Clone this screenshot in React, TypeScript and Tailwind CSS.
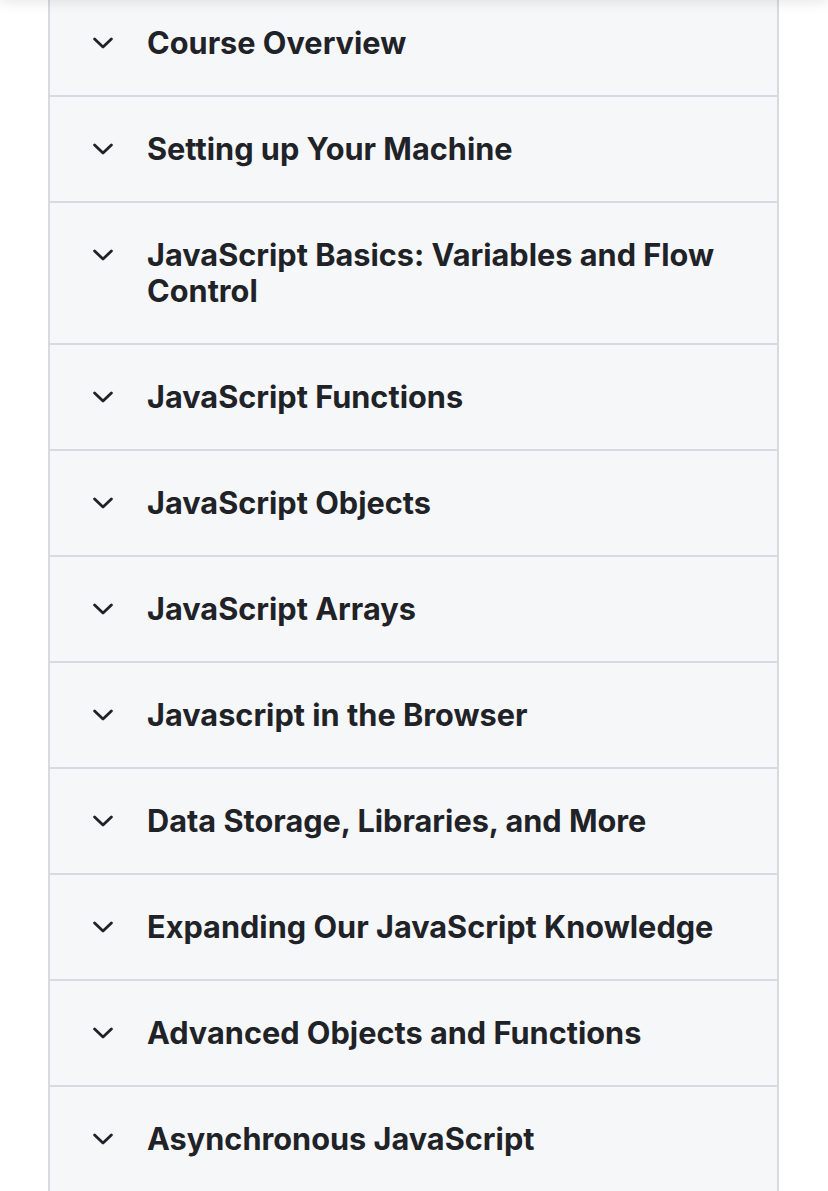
import React from "react";

const items = [
  "Course Overview",
  "Setting up Your Machine",
  "JavaScript Basics: Variables and Flow Control",
  "JavaScript Functions",
  "JavaScript Objects",
  "JavaScript Arrays",
  "Javascript in the Browser",
  "Data Storage, Libraries, and More",
  "Expanding Our JavaScript Knowledge",
  "Advanced Objects and Functions",
  "Asynchronous JavaScript",
];

function Chevron() {
  return (
    <svg width="20" height="12" viewBox="0 0 20 12" fill="none" className="block">
      <path d="M1.6 2 L10 10 L18.4 2" stroke="#1f2328" strokeWidth="2.8" strokeLinecap="round" strokeLinejoin="round" />
    </svg>
  );
}

export default function App() {
  return (
    <div className="relative min-h-screen bg-white overflow-hidden" style={{ fontFamily: "Inter, 'Noto Sans', sans-serif" }}>
      <div className="absolute left-0 right-0 -top-[20px] h-[20px] bg-white shadow-[0_2px_14px_rgba(0,0,0,0.10)] z-10" />
      <div className="ml-[48px] w-[731px] -mt-[9px] border-x-2 border-[#d8dadd] bg-[#f6f7f9]">
        {items.map((t) => (
          <div key={t} className="flex items-start border-b-2 border-[#d8dadd] py-[34px] pl-[43px] pr-[30px]">
            <div className="flex h-[36px] w-[20px] shrink-0 items-center">
              <Chevron />
            </div>
            <div className="ml-[34px] text-[30.7px] leading-[36px] font-bold text-[#1f2328]">
              {t}
            </div>
          </div>
        ))}
      </div>
    </div>
  );
}
